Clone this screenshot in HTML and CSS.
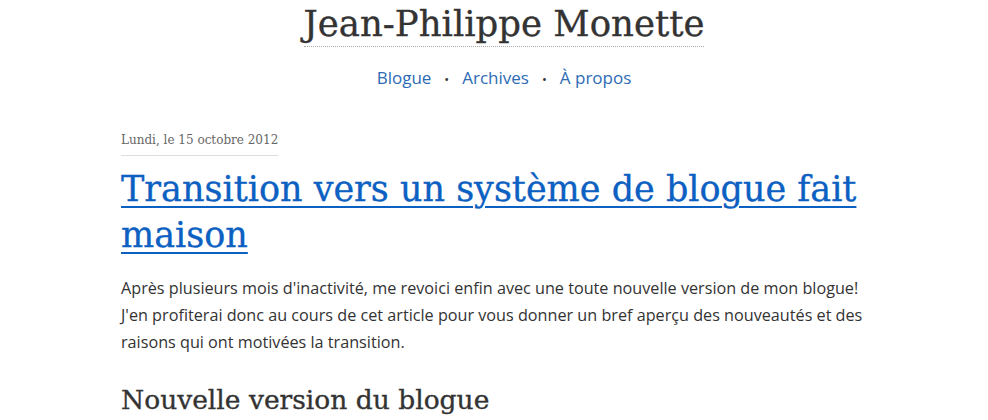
FILE: index.html
```html
<!DOCTYPE html>
<html lang="fr">
<head>
<meta charset="utf-8">
<title>Jean-Philippe Monette</title>
<link rel="stylesheet" href="styles.css">
</head>
<body>
<div class="wrap">
<header class="site-header">
  <h1 class="site-title"><a href="#">Jean-Philippe Monette</a></h1>
  <nav class="site-nav">
    <a href="#">Blogue</a><span class="sep">•</span><a href="#">Archives</a><span class="sep">•</span><a href="#">À propos</a>
  </nav>
</header>
<main class="content">
  <article>
    <div class="date">Lundi, le 15 octobre 2012</div>
    <h2 class="post-title"><a href="#">Transition vers un système de blogue fait maison</a></h2>
    <p>Après plusieurs mois d'inactivité, me revoici enfin avec une toute nouvelle version de mon blogue! J'en profiterai donc au cours de cet article pour vous donner un bref aperçu des nouveautés et des raisons qui ont motivées la transition.</p>
    <h3 class="section">Nouvelle version du blogue</h3>
  </article>
</main>
</div>
</body>
</html>
```
FILE: styles.css
```css
html, body { margin: 0; padding: 0; background: #fff; }
body { font-family: "Open Sans", sans-serif; color: #333; overflow: hidden; }
.wrap { width: 766px; margin-left: 121px; }
.site-header { text-align: center; padding-top: 2px; }
.site-title { margin: 0; display: inline-block; font-family: "DejaVu Serif", serif; font-weight: normal; font-size: 35.5px; line-height: 44px; border-bottom: 1px dotted #aaa; -webkit-text-stroke: 0.35px #333; }
.site-title a { color: #333; text-decoration: none; }
.site-nav { margin-top: 19px; font-size: 17px; line-height: 24px; }
.site-nav a { color: #2d6bb5; text-decoration: none; }
.site-nav .sep { margin: 0 13px; color: #333; font-size: 13px; }
.content { width: 746px; }
.date { display: inline-block; margin-top: 42px; font-family: "DejaVu Serif", serif; font-size: 12px; color: #666; padding-bottom: 8px; border-bottom: 1px solid #ddd; }
.post-title { margin: 10px 0 0; font-family: "DejaVu Serif", serif; font-weight: normal; font-size: 35px; line-height: 46px; -webkit-text-stroke: 0.35px #0b60c2; }
.post-title a { color: #0b60c2; text-decoration: underline; text-decoration-thickness: 2px; text-underline-offset: 5px; }
p { margin: 17px 0 0; font-size: 16.2px; line-height: 27px; color: #333; }
.section { margin: 28px 0 0; font-family: "DejaVu Serif", serif; font-weight: normal; font-size: 26.5px; color: #333; -webkit-text-stroke: 0.35px #333; }
```
